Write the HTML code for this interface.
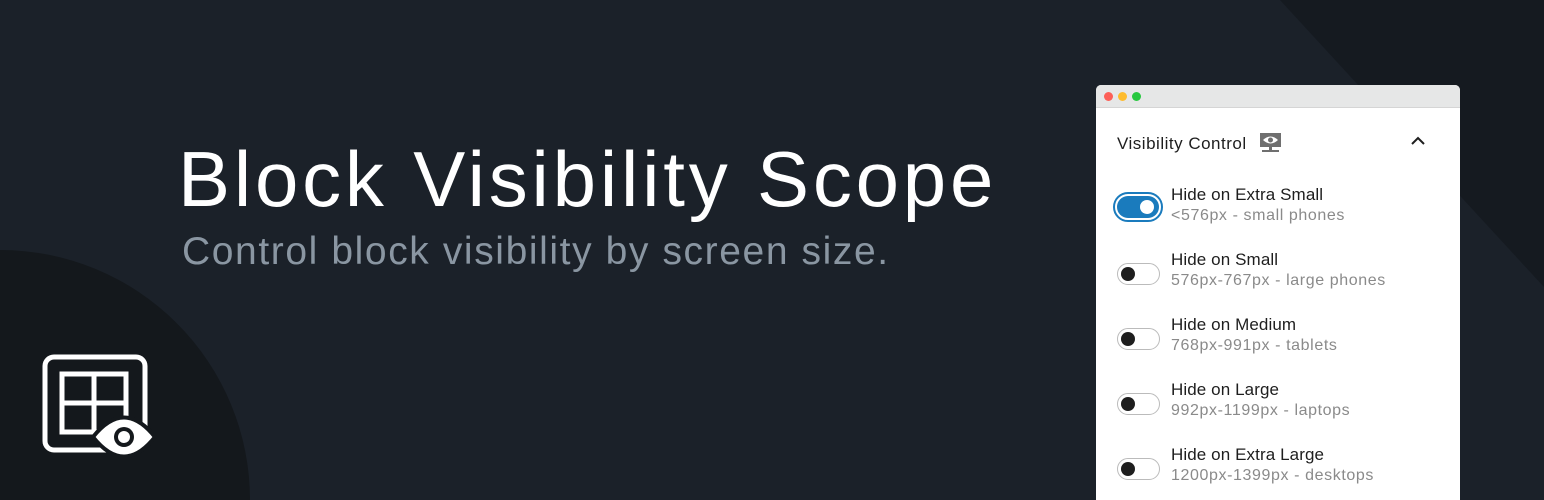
<!DOCTYPE html>
<html><head><meta charset="utf-8"><style>
*{margin:0;padding:0;box-sizing:border-box}
html,body{width:1544px;height:500px;overflow:hidden}
body{background:#1b2129;position:relative;font-family:"Liberation Sans",sans-serif}
.abs{position:absolute}
h1{position:absolute;left:178px;top:134px;font-size:78px;line-height:90px;font-weight:400;color:#fff;white-space:nowrap;letter-spacing:3.8px}
.sub{position:absolute;left:182px;top:229px;font-size:39px;line-height:45px;color:#8a96a2;white-space:nowrap;letter-spacing:1.6px}
.panel{position:absolute;left:1096px;top:85px;width:364px;height:415px;background:#fff;border-radius:5px 5px 0 0;overflow:hidden}
.bar{height:23px;background:#e6e7e7;border-bottom:1px solid #d5d5d5;position:relative}
.dot{position:absolute;top:7px;width:9px;height:9px;border-radius:50%}
.hdr{position:absolute;left:21px;top:49px;font-size:17px;color:#1e1e1e;letter-spacing:0.5px}
.row{position:absolute;left:0;width:364px;height:50px}
.t1{position:absolute;left:75px;top:0;font-size:17px;color:#1e1e1e;white-space:nowrap;letter-spacing:0.1px}
.t2{position:absolute;left:75px;top:22px;font-size:16px;color:#8a8a8a;white-space:nowrap;letter-spacing:0.6px}
.tg{position:absolute;left:21px;top:13px;width:43px;height:22px;border:1px solid #bbb;border-radius:11px;background:#fff}
.tg:after{content:"";position:absolute;left:3px;top:3px;width:14px;height:14px;border-radius:50%;background:#1e1e1e}
.on{left:17px;top:7px;width:50px;height:30px;border:2px solid #1a7bbd;border-radius:15px;background:#fff}
.on:before{content:"";position:absolute;left:2px;top:2px;right:2px;bottom:2px;border-radius:12px;background:#1a7bbd}
.on:after{left:25px;top:6px;width:14px;height:14px;background:#fff}
</style></head><body>
<svg class="abs" style="left:0;top:0" width="1544" height="500">
<polygon points="1280,0 1544,0 1544,287" fill="#151a20"/>
<circle cx="0" cy="500" r="250" fill="#14181c"/>
<rect x="45" y="357" width="100" height="93" rx="9" fill="none" stroke="#fff" stroke-width="5"/>
<rect x="62" y="374" width="64" height="58" fill="none" stroke="#fff" stroke-width="5"/>
<line x1="94" y1="374" x2="94" y2="432" stroke="#fff" stroke-width="5"/>
<line x1="62" y1="403" x2="126" y2="403" stroke="#fff" stroke-width="5"/>
<path d="M93,437 Q124,398 155,437 Q124,476 93,437Z" fill="#fff" stroke="#14181c" stroke-width="4"/>
<circle cx="124" cy="437" r="10" fill="#14181c"/>
<circle cx="124" cy="437" r="6" fill="#fff"/>
</svg>
<h1>Block Visibility Scope</h1>
<div class="sub">Control block visibility by screen size.</div>
<div class="panel">
<div class="bar"><span class="dot" style="left:8px;background:#fd5f57"></span><span class="dot" style="left:22px;background:#febc2e"></span><span class="dot" style="left:36px;background:#28c840"></span></div>
<div class="hdr">Visibility Control</div>
<svg class="abs" style="left:163px;top:48px" width="24" height="22"><rect x="1" y="0" width="21" height="14" fill="#6f6f6f"/><path d="M4,7 Q11.5,0 19,7 Q11.5,14 4,7Z" fill="#fff"/><circle cx="11.5" cy="7" r="2.5" fill="#6f6f6f"/><rect x="10" y="14" width="3" height="3" fill="#6f6f6f"/><rect x="3" y="17" width="17" height="2" fill="#6f6f6f"/></svg>
<svg class="abs" style="left:314px;top:50px" width="16" height="12"><path d="M2,9 L8,3 L14,9" fill="none" stroke="#1e1e1e" stroke-width="2"/></svg>
<div class="row" style="top:100px"><div class="tg on"></div><div class="t1">Hide on Extra Small</div><div class="t2">&lt;576px - small phones</div></div>
<div class="row" style="top:165px"><div class="tg"></div><div class="t1">Hide on Small</div><div class="t2">576px-767px - large phones</div></div>
<div class="row" style="top:230px"><div class="tg"></div><div class="t1">Hide on Medium</div><div class="t2">768px-991px - tablets</div></div>
<div class="row" style="top:295px"><div class="tg"></div><div class="t1">Hide on Large</div><div class="t2">992px-1199px - laptops</div></div>
<div class="row" style="top:360px"><div class="tg"></div><div class="t1">Hide on Extra Large</div><div class="t2">1200px-1399px - desktops</div></div>
</div>
</body></html>
